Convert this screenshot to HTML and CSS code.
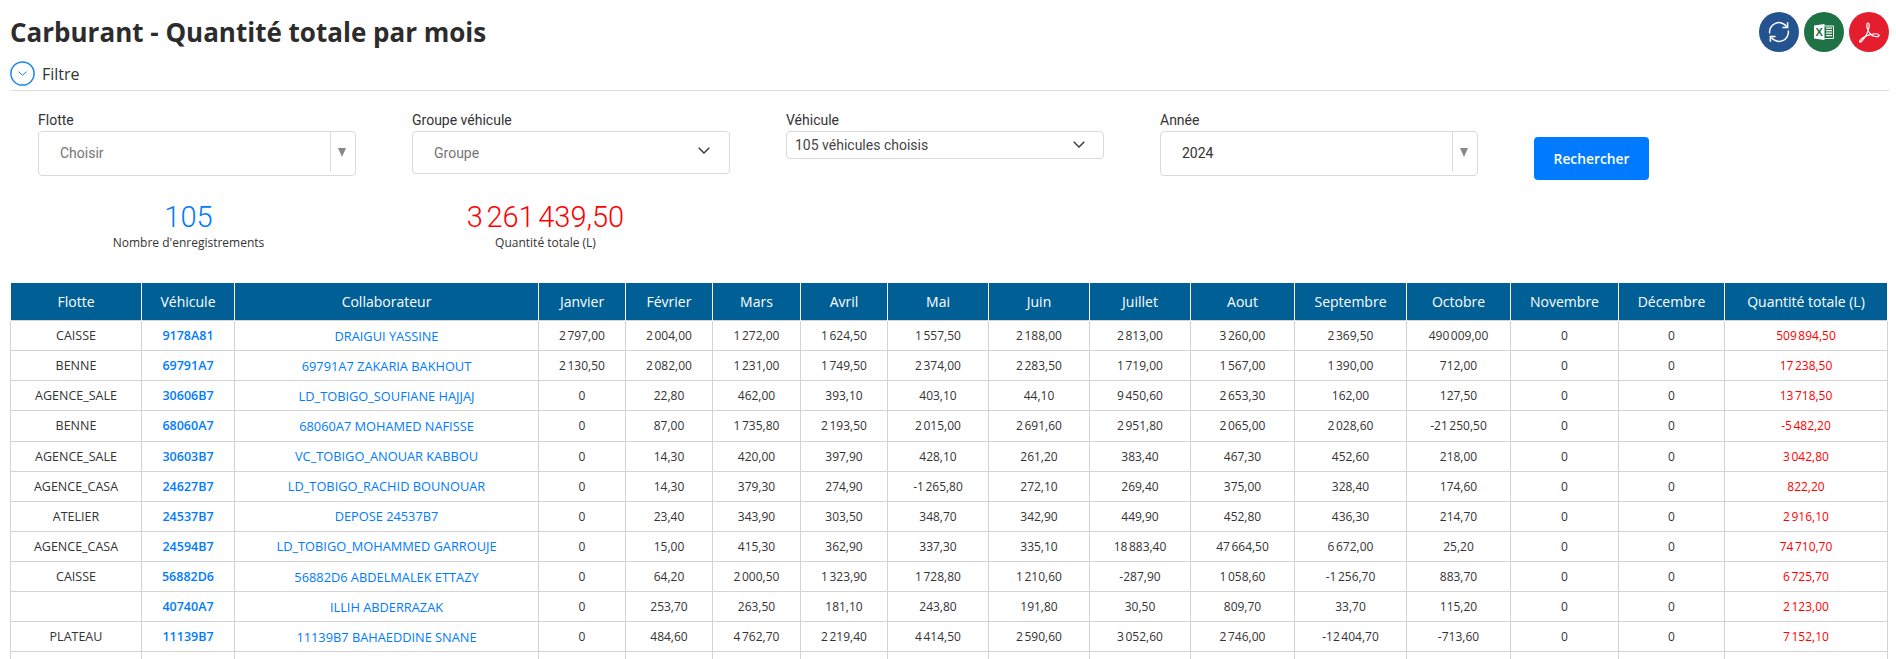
FILE: index.html
```html
<!DOCTYPE html>
<html lang="fr">
<head>
    <meta charset="UTF-8">
    <title>Carburant - Quantité totale par mois</title>
    <link rel="stylesheet" href="styles.css">
</head>
<body>

    <div class="page-head">
        <h1 class="page-title">Carburant - Quantité totale par mois</h1>
        <div class="actions">
            <button class="action action-refresh" title="Actualiser">
                <svg viewBox="0 0 40 40" width="40" height="40" fill="none" stroke="#fff" stroke-width="1.5">
                    <path d="M10.7 21.5A9.4 9.4 0 0 1 27.6 14.5"/>
                    <path d="M28.6 10.2v5.2h-5.2"/>
                    <path d="M29.3 18.5A9.4 9.4 0 0 1 12.4 25.5"/>
                    <path d="M11.4 29.8v-5.2h5.2"/>
                </svg>
            </button>
            <button class="action action-excel" title="Excel">
                <svg viewBox="0 0 40 40" width="40" height="40">
                    <path d="M10 13.6L20.5 12V28L10 26.4Z" fill="#fff"/>
                    <text x="15.2" y="24" class="excel-x">X</text>
                    <path d="M20.5 14H29.5V26.5H20.5" fill="none" stroke="#fff" stroke-width="1"/>
                    <path d="M22 16.2h6M22 18.7h6M22 21.2h6M22 23.7h6" stroke="#fff" stroke-width="1.3"/>
                </svg>
            </button>
            <button class="action action-pdf" title="PDF">
                <svg viewBox="0 0 40 40" width="40" height="40" fill="none" stroke="#fff" stroke-width="1.2">
                    <path d="M19 11c-1.500 0-1.500 3-.5 6c1.500 4.500 4.500 7 7.500 7.500c2.500.4 4.500-.3 4-1.500c-.6-1.400-5-1.300-9-.3c-4 1-8 3.500-10 6c-1 1.300 0 2 1.200 1c3-2.500 6-8 7.500-13c.9-3 .5-5.700-.7-5.700z"/>
                </svg>
            </button>
        </div>
    </div>

    <div class="filter-toggle">
        <span class="toggle-icon">
            <svg viewBox="0 0 25 25" width="25" height="25" fill="none" stroke="#1a85f0">
                <circle cx="12.500" cy="12.500" r="11.600" stroke-width="1.500"/>
                <path d="M8.500 10.700l4 3.500l4-3.500" stroke-width="1"/>
            </svg>
        </span>
        <span class="toggle-label">Filtre</span>
    </div>

    <div class="filters">
        <div class="field">
            <label class="field-label">Flotte</label>
            <div class="combo">
                <span class="combo-value">Choisir</span>
                <span class="combo-arrow"></span>
            </div>
        </div>
        <div class="field">
            <label class="field-label">Groupe véhicule</label>
            <div class="dropdown dropdown-large">
                <span>Groupe</span>
                <svg class="chevron" viewBox="0 0 12 7" width="12" height="7"><path d="M.7 .7l5.300 5.300l5.300-5.300"/></svg>
            </div>
        </div>
        <div class="field">
            <label class="field-label">Véhicule</label>
            <div class="dropdown dropdown-small">
                <span>105 véhicules choisis</span>
                <svg class="chevron" viewBox="0 0 12 7" width="12" height="7"><path d="M.7 .7l5.300 5.300l5.300-5.300"/></svg>
            </div>
        </div>
        <div class="field">
            <label class="field-label">Année</label>
            <div class="combo">
                <span class="combo-value combo-filled">2024</span>
                <span class="combo-arrow"></span>
            </div>
        </div>
        <button class="search-button">Rechercher</button>
    </div>

    <div class="totals">
        <div class="total">
            <div class="total-value total-blue">105</div>
            <div class="total-label">Nombre d'enregistrements</div>
        </div>
        <div class="total">
            <div class="total-value total-red">3&#8239;261&#8239;439,50</div>
            <div class="total-label">Quantité totale (L)</div>
        </div>
    </div>

    <table class="report">
        <colgroup>
            <col class="w131"><col class="w93"><col class="w304"><col class="w87"><col class="w87"><col class="w88"><col class="w87"><col class="w101"><col class="w101"><col class="w101"><col class="w104"><col class="w112"><col class="w104"><col class="w108"><col class="w106"><col class="w163">
        </colgroup>
        <thead>
            <tr><th>Flotte</th><th>Véhicule</th><th>Collaborateur</th><th>Janvier</th><th>Février</th><th>Mars</th><th>Avril</th><th>Mai</th><th>Juin</th><th>Juillet</th><th>Aout</th><th>Septembre</th><th>Octobre</th><th>Novembre</th><th>Décembre</th><th>Quantité totale (L)</th></tr>
        </thead>
        <tbody>
            <tr><td class="fleet">CAISSE</td><td class="plate">9178A81</td><td class="person">DRAIGUI YASSINE</td><td>2&#8239;797,00</td><td>2&#8239;004,00</td><td>1&#8239;272,00</td><td>1&#8239;624,50</td><td>1&#8239;557,50</td><td>2&#8239;188,00</td><td>2&#8239;813,00</td><td>3&#8239;260,00</td><td>2&#8239;369,50</td><td>490&#8239;009,00</td><td>0</td><td>0</td><td class="sum">509&#8239;894,50</td></tr>
            <tr><td class="fleet">BENNE</td><td class="plate">69791A7</td><td class="person">69791A7 ZAKARIA BAKHOUT</td><td>2&#8239;130,50</td><td>2&#8239;082,00</td><td>1&#8239;231,00</td><td>1&#8239;749,50</td><td>2&#8239;374,00</td><td>2&#8239;283,50</td><td>1&#8239;719,00</td><td>1&#8239;567,00</td><td>1&#8239;390,00</td><td>712,00</td><td>0</td><td>0</td><td class="sum">17&#8239;238,50</td></tr>
            <tr><td class="fleet">AGENCE_SALE</td><td class="plate">30606B7</td><td class="person">LD_TOBIGO_SOUFIANE HAJJAJ</td><td>0</td><td>22,80</td><td>462,00</td><td>393,10</td><td>403,10</td><td>44,10</td><td>9&#8239;450,60</td><td>2&#8239;653,30</td><td>162,00</td><td>127,50</td><td>0</td><td>0</td><td class="sum">13&#8239;718,50</td></tr>
            <tr><td class="fleet">BENNE</td><td class="plate">68060A7</td><td class="person">68060A7 MOHAMED NAFISSE</td><td>0</td><td>87,00</td><td>1&#8239;735,80</td><td>2&#8239;193,50</td><td>2&#8239;015,00</td><td>2&#8239;691,60</td><td>2&#8239;951,80</td><td>2&#8239;065,00</td><td>2&#8239;028,60</td><td>-21&#8239;250,50</td><td>0</td><td>0</td><td class="sum">-5&#8239;482,20</td></tr>
            <tr><td class="fleet">AGENCE_SALE</td><td class="plate">30603B7</td><td class="person">VC_TOBIGO_ANOUAR KABBOU</td><td>0</td><td>14,30</td><td>420,00</td><td>397,90</td><td>428,10</td><td>261,20</td><td>383,40</td><td>467,30</td><td>452,60</td><td>218,00</td><td>0</td><td>0</td><td class="sum">3&#8239;042,80</td></tr>
            <tr><td class="fleet">AGENCE_CASA</td><td class="plate">24627B7</td><td class="person">LD_TOBIGO_RACHID BOUNOUAR</td><td>0</td><td>14,30</td><td>379,30</td><td>274,90</td><td>-1&#8239;265,80</td><td>272,10</td><td>269,40</td><td>375,00</td><td>328,40</td><td>174,60</td><td>0</td><td>0</td><td class="sum">822,20</td></tr>
            <tr><td class="fleet">ATELIER</td><td class="plate">24537B7</td><td class="person">DEPOSE 24537B7</td><td>0</td><td>23,40</td><td>343,90</td><td>303,50</td><td>348,70</td><td>342,90</td><td>449,90</td><td>452,80</td><td>436,30</td><td>214,70</td><td>0</td><td>0</td><td class="sum">2&#8239;916,10</td></tr>
            <tr><td class="fleet">AGENCE_CASA</td><td class="plate">24594B7</td><td class="person">LD_TOBIGO_MOHAMMED GARROUJE</td><td>0</td><td>15,00</td><td>415,30</td><td>362,90</td><td>337,30</td><td>335,10</td><td>18&#8239;883,40</td><td>47&#8239;664,50</td><td>6&#8239;672,00</td><td>25,20</td><td>0</td><td>0</td><td class="sum">74&#8239;710,70</td></tr>
            <tr><td class="fleet">CAISSE</td><td class="plate">56882D6</td><td class="person">56882D6 ABDELMALEK ETTAZY</td><td>0</td><td>64,20</td><td>2&#8239;000,50</td><td>1&#8239;323,90</td><td>1&#8239;728,80</td><td>1&#8239;210,60</td><td>-287,90</td><td>1&#8239;058,60</td><td>-1&#8239;256,70</td><td>883,70</td><td>0</td><td>0</td><td class="sum">6&#8239;725,70</td></tr>
            <tr><td class="fleet"></td><td class="plate">40740A7</td><td class="person">ILLIH ABDERRAZAK</td><td>0</td><td>253,70</td><td>263,50</td><td>181,10</td><td>243,80</td><td>191,80</td><td>30,50</td><td>809,70</td><td>33,70</td><td>115,20</td><td>0</td><td>0</td><td class="sum">2&#8239;123,00</td></tr>
            <tr><td class="fleet">PLATEAU</td><td class="plate">11139B7</td><td class="person">11139B7 BAHAEDDINE SNANE</td><td>0</td><td>484,60</td><td>4&#8239;762,70</td><td>2&#8239;219,40</td><td>4&#8239;414,50</td><td>2&#8239;590,60</td><td>3&#8239;052,60</td><td>2&#8239;746,00</td><td>-12&#8239;404,70</td><td>-713,60</td><td>0</td><td>0</td><td class="sum">7&#8239;152,10</td></tr>
            <tr><td></td><td></td><td></td><td></td><td></td><td></td><td></td><td></td><td></td><td></td><td></td><td></td><td></td><td></td><td></td><td></td></tr>
        </tbody>
    </table>

</body>
</html>
```

FILE: styles.css
```css
html {
    overflow: hidden;
}

body {
    margin: 0;
    padding: 0 7px 0 10px;
    background-color: #fff;
    color: #333;
    font-family: "Open Sans", sans-serif;
}

.page-head {
    display: flex;
    justify-content: space-between;
    align-items: flex-start;
    height: 61px;
    padding-top: 12px;
    box-sizing: border-box;
}

.page-title {
    margin: 0;
    font-size: 26px;
    line-height: 40px;
    font-weight: 700;
    color: #2c2c2c;
}

.actions {
    display: flex;
    gap: 5px;
}

.action {
    width: 40px;
    height: 40px;
    padding: 0;
    border: none;
    border-radius: 50%;
    cursor: pointer;
}

.action-refresh { background-color: #25538f; }
.action-excel { background-color: #1f7244; }
.action-pdf { background-color: #e41e2f; }

.excel-x {
    font-family: "Liberation Sans", sans-serif;
    font-size: 11px;
    font-weight: 700;
    fill: #1f7244;
    text-anchor: middle;
}

.filter-toggle {
    display: flex;
    align-items: center;
    gap: 7px;
    height: 25px;
    padding-bottom: 4px;
    border-bottom: 1px solid #e0e0e0;
}

.toggle-icon {
    display: flex;
}

.toggle-label {
    font-size: 16px;
    color: #333;
}

.filters {
    display: grid;
    grid-template-columns: repeat(4, 318px) 115px;
    column-gap: 56px;
    align-items: start;
    padding: 19px 0 0 28px;
    height: 109px;
    box-sizing: border-box;
}

.field-label {
    display: block;
    height: 21px;
    font-family: "Roboto", sans-serif;
    font-size: 14px;
    line-height: 20px;
    color: #333;
}

.combo {
    display: flex;
    height: 45px;
    box-sizing: border-box;
    border: 1px solid #d9d9d9;
    border-radius: 4px;
    font-family: "Roboto", sans-serif;
    font-size: 14px;
}

.combo-value {
    flex: 1;
    padding-left: 21px;
    line-height: 43px;
    color: #757575;
}

.combo-filled {
    color: #333;
}

.combo-arrow {
    position: relative;
    width: 24px;
    margin-bottom: 3px;
    border-left: 1px solid #d9d9d9;
}

.combo-arrow::after {
    content: "";
    position: absolute;
    left: 7px;
    top: 16px;
    border-left: 4.5px solid transparent;
    border-right: 4.5px solid transparent;
    border-top: 9px solid #888;
}

.dropdown {
    display: flex;
    justify-content: space-between;
    align-items: center;
    box-sizing: border-box;
    border: 1px solid #d9d9d9;
    border-radius: 4px;
    font-family: "Roboto", sans-serif;
    font-size: 14px;
}

.dropdown-large {
    height: 43px;
    padding: 1px 19px 0 21px;
    color: #757575;
}

.dropdown-small {
    height: 28px;
    padding: 0 18px 0 8px;
    color: #444;
}

.chevron {
    fill: none;
    stroke: #333;
    stroke-width: 1.3;
}

.dropdown-large .chevron { margin-top: -6px; }
.dropdown-small .chevron { margin-top: -2px; }

.search-button {
    width: 115px;
    height: 43px;
    margin-top: 27px;
    padding: 0;
    border: none;
    border-radius: 4px;
    background-color: #007bff;
    color: #fff;
    font-family: "Open Sans", sans-serif;
    font-size: 13.8px;
    font-weight: 600;
    cursor: pointer;
}

.totals {
    display: flex;
    height: 83px;
}

.total {
    width: 357px;
    text-align: center;
}

.total-value {
    font-family: "Roboto", sans-serif;
    font-size: 29px;
    line-height: 34px;
    font-weight: 300;
}

.total-blue { color: #007bff; }
.total-red { color: #f00; }

.total-label {
    font-size: 12px;
    line-height: 18px;
    color: #333;
}

.report {
    width: 1877px;
    table-layout: fixed;
    border-collapse: collapse;
    font-size: 12px;
    text-align: center;
}

.w93 { width: 93px; }
.w131 { width: 131px; }
.w304 { width: 304px; }
.w87 { width: 87px; }
.w88 { width: 88px; }
.w101 { width: 101px; }
.w104 { width: 104px; }
.w112 { width: 112px; }
.w108 { width: 108px; }
.w106 { width: 106px; }
.w163 { width: 163px; }

.report th {
    height: 37px;
    padding: 0;
    border-right: 1px solid #fff;
    border-left: 1px solid #fff;
    background-color: #006096;
    color: #fff;
    font-size: 14px;
    font-weight: 400;
}

.report td {
    height: 29.125px;
    padding: 0;
    border: 1px solid #d3d3d3;
    color: #333;
}

.report td.fleet {
    font-size: 12.5px;
}

.report td.plate {
    color: #007bff;
    font-size: 12.5px;
    font-weight: 600;
}

.report td.person {
    color: #007bff;
    font-size: 12.8px;
}

.report td.sum {
    color: #f00;
    font-weight: 500;
}
```
